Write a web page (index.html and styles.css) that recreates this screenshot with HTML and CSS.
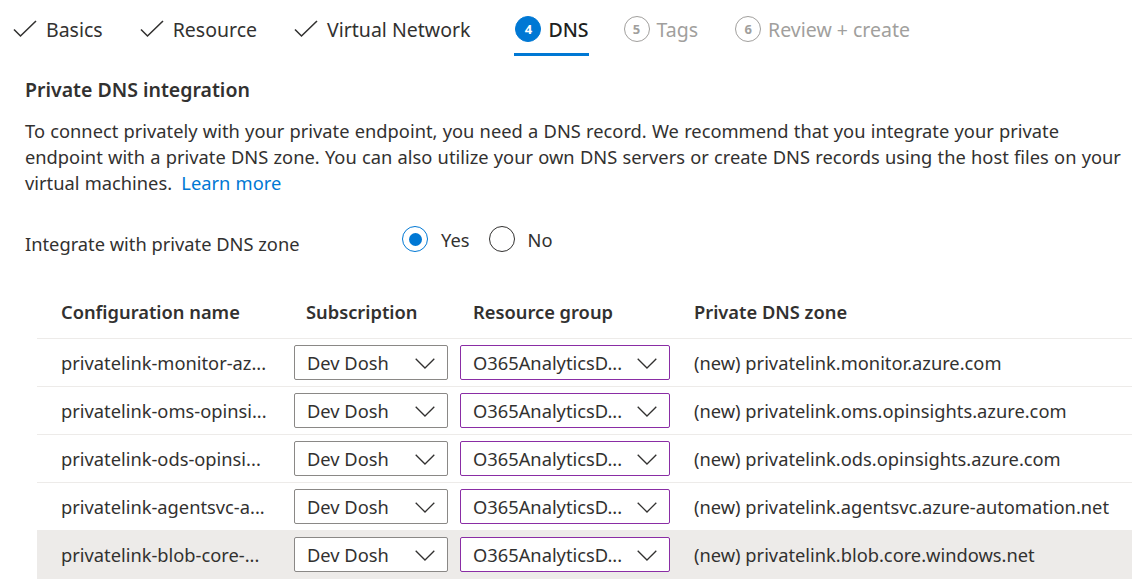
FILE: index.html
```html
<!DOCTYPE html>
<html lang="en">
<head>
<meta charset="utf-8">
<title>Private endpoint - DNS</title>
<link rel="stylesheet" href="styles.css">
</head>
<body>
<nav class="tabs">
  <div class="tab done">
    <svg class="check" viewBox="0 0 24 18" width="24" height="18"><path d="M1 9.5 L7.5 16 L23 1" fill="none" stroke="#323130" stroke-width="1.6"/></svg>
    <span class="tab-label">Basics</span>
  </div>
  <div class="tab done">
    <svg class="check" viewBox="0 0 24 18" width="24" height="18"><path d="M1 9.5 L7.5 16 L23 1" fill="none" stroke="#323130" stroke-width="1.6"/></svg>
    <span class="tab-label">Resource</span>
  </div>
  <div class="tab done">
    <svg class="check" viewBox="0 0 24 18" width="24" height="18"><path d="M1 9.5 L7.5 16 L23 1" fill="none" stroke="#323130" stroke-width="1.6"/></svg>
    <span class="tab-label">Virtual Network</span>
  </div>
  <div class="tab active">
    <span class="step step-active">4</span>
    <span class="tab-label">DNS</span>
  </div>
  <div class="tab disabled">
    <span class="step">5</span>
    <span class="tab-label">Tags</span>
  </div>
  <div class="tab disabled">
    <span class="step">6</span>
    <span class="tab-label">Review + create</span>
  </div>
</nav>

<main class="content">
  <h2 class="section-title">Private DNS integration</h2>
  <p class="intro">To connect privately with your private endpoint, you need a DNS record. We recommend that you integrate your private endpoint with a private DNS zone. You can also utilize your own DNS servers or create DNS records using the host files on your virtual machines. <a class="link" href="#">Learn more</a></p>

  <div class="form-row">
    <div class="form-label">Integrate with private DNS zone</div>
    <div class="radios">
      <label class="radio"><span class="radio-ring checked"><span class="radio-dot"></span></span><span>Yes</span></label>
      <label class="radio"><span class="radio-ring"></span><span>No</span></label>
    </div>
  </div>

  <div class="table">
    <div class="row head">
      <div class="c1">Configuration name</div>
      <div class="c2 hpad">Subscription</div>
      <div class="c3 hpad">Resource group</div>
      <div class="c4">Private DNS zone</div>
    </div>

    <div class="row">
      <div class="c1">privatelink-monitor-az...</div>
      <div class="c2"><div class="dropdown"><span>Dev Dosh</span><svg class="chev" viewBox="0 0 20 11" width="20" height="11"><path d="M0.7 0.7 L10 10 L19.3 0.7" fill="none" stroke="#323130" stroke-width="1.3"/></svg></div></div>
      <div class="c3"><div class="dropdown rg"><span>O365AnalyticsD...</span><svg class="chev" viewBox="0 0 20 11" width="20" height="11"><path d="M0.7 0.7 L10 10 L19.3 0.7" fill="none" stroke="#323130" stroke-width="1.3"/></svg></div></div>
      <div class="c4">(new) privatelink.monitor.azure.com</div>
    </div>

    <div class="row">
      <div class="c1">privatelink-oms-opinsi...</div>
      <div class="c2"><div class="dropdown"><span>Dev Dosh</span><svg class="chev" viewBox="0 0 20 11" width="20" height="11"><path d="M0.7 0.7 L10 10 L19.3 0.7" fill="none" stroke="#323130" stroke-width="1.3"/></svg></div></div>
      <div class="c3"><div class="dropdown rg"><span>O365AnalyticsD...</span><svg class="chev" viewBox="0 0 20 11" width="20" height="11"><path d="M0.7 0.7 L10 10 L19.3 0.7" fill="none" stroke="#323130" stroke-width="1.3"/></svg></div></div>
      <div class="c4">(new) privatelink.oms.opinsights.azure.com</div>
    </div>

    <div class="row">
      <div class="c1">privatelink-ods-opinsi...</div>
      <div class="c2"><div class="dropdown"><span>Dev Dosh</span><svg class="chev" viewBox="0 0 20 11" width="20" height="11"><path d="M0.7 0.7 L10 10 L19.3 0.7" fill="none" stroke="#323130" stroke-width="1.3"/></svg></div></div>
      <div class="c3"><div class="dropdown rg"><span>O365AnalyticsD...</span><svg class="chev" viewBox="0 0 20 11" width="20" height="11"><path d="M0.7 0.7 L10 10 L19.3 0.7" fill="none" stroke="#323130" stroke-width="1.3"/></svg></div></div>
      <div class="c4">(new) privatelink.ods.opinsights.azure.com</div>
    </div>

    <div class="row">
      <div class="c1">privatelink-agentsvc-a...</div>
      <div class="c2"><div class="dropdown"><span>Dev Dosh</span><svg class="chev" viewBox="0 0 20 11" width="20" height="11"><path d="M0.7 0.7 L10 10 L19.3 0.7" fill="none" stroke="#323130" stroke-width="1.3"/></svg></div></div>
      <div class="c3"><div class="dropdown rg"><span>O365AnalyticsD...</span><svg class="chev" viewBox="0 0 20 11" width="20" height="11"><path d="M0.7 0.7 L10 10 L19.3 0.7" fill="none" stroke="#323130" stroke-width="1.3"/></svg></div></div>
      <div class="c4">(new) privatelink.agentsvc.azure-automation.net</div>
    </div>

    <div class="row hover">
      <div class="c1">privatelink-blob-core-...</div>
      <div class="c2"><div class="dropdown"><span>Dev Dosh</span><svg class="chev" viewBox="0 0 20 11" width="20" height="11"><path d="M0.7 0.7 L10 10 L19.3 0.7" fill="none" stroke="#323130" stroke-width="1.3"/></svg></div></div>
      <div class="c3"><div class="dropdown rg"><span>O365AnalyticsD...</span><svg class="chev" viewBox="0 0 20 11" width="20" height="11"><path d="M0.7 0.7 L10 10 L19.3 0.7" fill="none" stroke="#323130" stroke-width="1.3"/></svg></div></div>
      <div class="c4">(new) privatelink.blob.core.windows.net</div>
    </div>
  </div>
</main>
</body>
</html>
```

FILE: styles.css
```css
* { box-sizing: border-box; }

html, body {
  margin: 0;
  padding: 0;
  background: #ffffff;
  overflow: hidden;
}

body {
  width: 1132px;
  height: 586px;
  font-family: "Noto Sans", "Open Sans", sans-serif;
  font-size: 18.3px;
  color: #323130;
}

/* ---------- tabs ---------- */
.tabs {
  display: flex;
  padding-left: 13px;
  height: 56px;
}

.tab {
  display: flex;
  align-items: center;
  height: 56px;
  padding-top: 5px;
  border-bottom: 3px solid transparent;
  margin-right: 37px;
  font-size: 19.5px;
  white-space: nowrap;
}

.tab.done .check { margin-right: 9px; flex: none; }

.tab.active {
  border-bottom-color: #0078d4;
  margin-left: 7px;
  margin-right: 35px;
}

.tab.disabled { color: #a19f9d; margin-right: 37px; }

.step {
  width: 26px;
  height: 26px;
  border-radius: 50%;
  border: 1.5px solid #a19f9d;
  display: inline-flex;
  align-items: center;
  justify-content: center;
  font-size: 13px;
  font-weight: 700;
  color: #a19f9d;
  margin-right: 7px;
  flex: none;
}

.step-active {
  background: #0078d4;
  border-color: #0078d4;
  color: #ffffff;
  margin-left: 1px;
}

.tab.active .tab-label { color: #201f1e; font-weight: 500; }

/* ---------- content ---------- */
.content { padding: 21px 0 0 25px; }

.section-title {
  margin: 0;
  font-size: 19.5px;
  font-weight: 600;
  line-height: 26px;
  color: #323130;
}

.intro {
  margin: 15px 0 0 0;
  width: 1104px;
  line-height: 26px;
  word-spacing: 0.5px;
}

.link { color: #0078d4; text-decoration: none; margin-left: 4px; }

.form-row {
  display: flex;
  margin-top: 30px;
}

.form-label {
  width: 377px;
  padding-top: 5px;
  line-height: 26px;
}

.radios { display: flex; align-items: center; height: 26px; }

.radio {
  display: flex;
  align-items: center;
  margin-right: 19px;
}

.radio-ring {
  width: 26px;
  height: 26px;
  border-radius: 50%;
  border: 1.3px solid #323130;
  display: inline-flex;
  align-items: center;
  justify-content: center;
  margin-right: 13px;
}

.radio-ring.checked { border-color: #0078d4; }

.radio-dot {
  width: 13px;
  height: 13px;
  border-radius: 50%;
  background: #0078d4;
}

/* ---------- table ---------- */
.table {
  margin-top: 34px;
  margin-left: 12px;
}

.row {
  display: flex;
  align-items: center;
  height: 48px;
  padding-left: 24px;
  border-bottom: 1px solid #edebe9;
  white-space: nowrap;
}

.row.head {
  border-bottom: 1px solid #edebe9;
  padding-bottom: 6px;
  font-weight: 600;
  color: #323130;
}

.row.hover { background: #edebe9; border-bottom-color: #edebe9; }

.c1 { width: 233px; flex: none; }
.c2 { width: 154px; flex: none; margin-right: 12px; }
.c3 { width: 210px; flex: none; margin-right: 24px; }
.c4 { flex: 1; }

.hpad { padding-left: 12px; }
.c3.hpad { padding-left: 13px; }

.dropdown {
  height: 35px;
  border: 1px solid #8a8886;
  border-radius: 2px;
  background: #ffffff;
  display: flex;
  align-items: center;
  justify-content: space-between;
  padding: 0 12px 0 12px;
}

.dropdown.rg { border-color: #8a2da5; }

.chev { flex: none; margin-top: 1px; }
```
